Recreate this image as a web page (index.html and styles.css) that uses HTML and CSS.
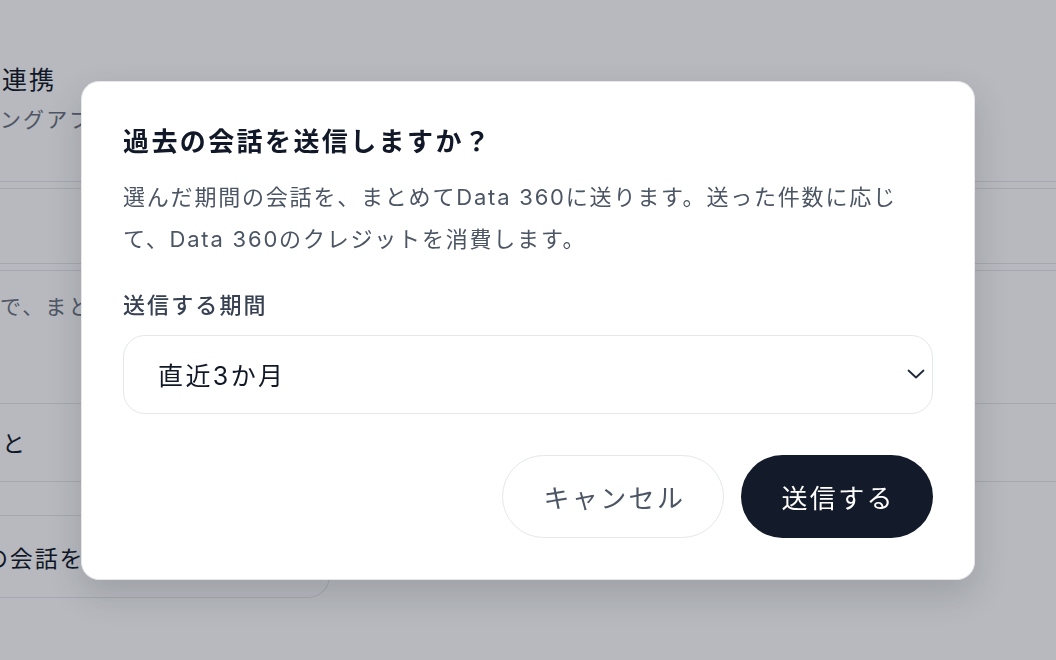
FILE: index.html
```html
<!DOCTYPE html>
<html lang="ja">
<head>
    <meta charset="UTF-8">
    <meta name="viewport" content="width=device-width, initial-scale=1.0">
    <title>過去の会話を送信</title>
    <link rel="stylesheet" href="styles.css">
</head>
<body>
    <!-- 背景の設定ページ -->
    <div class="page">
        <h2 class="page-title">連携</h2>
        <p class="page-sub">ングアプリ</p>
        <div class="rule rule-top"></div>
        <div class="field-box"></div>
        <div class="rule"></div>
        <p class="row-note">で、まと</p>
        <div class="rule rule-mid"></div>
        <p class="row-text">と</p>
        <div class="rule rule-gap"></div>
        <div class="send-box">
            <span class="send-label">の会話を</span>
        </div>
    </div>

    <!-- モーダル -->
    <div class="overlay">
        <div class="modal">
            <h1 class="modal-title">過去の会話を送信しますか？</h1>
            <p class="modal-desc">選んだ期間の会話を、まとめてData 360に送ります。送った件数に応じて、Data 360のクレジットを消費します。</p>

            <label class="field-label">送信する期間</label>
            <div class="select-box" id="periodSelect">
                <span class="select-value">直近3か月</span>
                <svg class="select-arrow" width="18" height="10" viewBox="0 0 18 10">
                    <path d="M1.5 1.5 L9 8.5 L16.5 1.5" fill="none" stroke="#1f2937" stroke-width="1.8" stroke-linecap="round" stroke-linejoin="round"/>
                </svg>
            </div>

            <div class="modal-actions">
                <button class="btn btn-cancel">キャンセル</button>
                <button class="btn btn-submit">送信する</button>
            </div>
        </div>
    </div>
</body>
</html>
```

FILE: styles.css
```css
body {
    font-family: Inter, "Noto Sans CJK JP", sans-serif;
    margin: 0;
    padding: 0;
    background-color: #ffffff;
    height: 100vh;
    overflow: hidden;
}

/* 背景ページ */
.page {
    padding-top: 62px;
}

.page-title {
    margin: 0 0 0 2px;
    font-size: 25px;
    font-weight: 400;
    line-height: 36px;
    letter-spacing: 0.08em;
    color: #111827;
}

.page-sub {
    margin: 7px 0 0 0;
    font-size: 21px;
    line-height: 30px;
    letter-spacing: 0.1em;
    color: #6b7280;
}

.rule {
    height: 1px;
    background-color: #e5e7eb;
}

.rule-top {
    margin-top: 46px;
}

.field-box {
    height: 74px;
    margin-top: 6px;
    border-top: 1px solid #e5e7eb;
    border-bottom: 1px solid #e5e7eb;
    margin-bottom: 6px;
}

.row-note {
    margin: 21px 0 0 0;
    font-size: 21px;
    line-height: 30px;
    letter-spacing: 0.1em;
    color: #6b7280;
}

.rule-mid {
    margin-top: 81px;
}

.row-text {
    margin: 24px 0 0 2px;
    font-size: 23px;
    line-height: 32px;
    color: #111827;
}

.rule-gap {
    margin-top: 21px;
    margin-bottom: 33px;
}

.send-box {
    width: 330px;
    height: 83px;
    box-sizing: border-box;
    border-top: 1px solid #e5e7eb;
    border-bottom: 1px solid #e5e7eb;
    border-right: 1px solid #e5e7eb;
    border-radius: 0 22px 22px 0;
    display: flex;
    align-items: center;
}

.send-label {
    margin-left: -15px;
    font-size: 23px;
    letter-spacing: 0.08em;
    color: #111827;
}

/* モーダル */
.overlay {
    position: fixed;
    inset: 0;
    background-color: rgba(17, 24, 39, 0.3);
    display: flex;
    justify-content: center;
    align-items: center;
}

.modal {
    width: 894px;
    box-sizing: border-box;
    padding: 40px 41px 41px 41px;
    background-color: #ffffff;
    border: 1px solid #e5e7eb;
    border-radius: 18px;
    box-shadow: 0 14px 34px rgba(17, 24, 39, 0.16);
}

.modal-title {
    margin: 0;
    font-size: 26px;
    font-weight: 600;
    line-height: 40px;
    letter-spacing: 2.4px;
    color: #111827;
}

.modal-desc {
    max-width: 790px;
    margin: 14px 0 0 0;
    font-size: 22px;
    line-height: 42px;
    letter-spacing: 1.8px;
    color: #4b5563;
}

.field-label {
    display: block;
    margin-top: 29px;
    font-size: 22px;
    font-weight: 500;
    line-height: 33px;
    letter-spacing: 2.1px;
    color: #374151;
}

.select-box {
    margin-top: 13px;
    height: 79px;
    box-sizing: border-box;
    border: 1.5px solid #e5e7eb;
    border-radius: 22px;
    padding: 0 7px 0 34px;
    display: flex;
    justify-content: space-between;
    align-items: center;
}

.select-value {
    font-size: 25px;
    letter-spacing: 2.4px;
    color: #111827;
}

.select-arrow {
    display: block;
}

.modal-actions {
    margin-top: 41px;
    display: flex;
    justify-content: flex-end;
    gap: 17px;
}

.btn {
    height: 83px;
    padding: 0 38px 0 40px;
    border-radius: 42px;
    font-family: inherit;
    font-size: 26px;
    letter-spacing: 2.4px;
    cursor: pointer;
}

.btn-cancel {
    background-color: #ffffff;
    border: 1.5px solid #e5e7eb;
    color: #4b5563;
}

.btn-submit {
    background-color: #131a2a;
    border: none;
    color: #ffffff;
}
```
